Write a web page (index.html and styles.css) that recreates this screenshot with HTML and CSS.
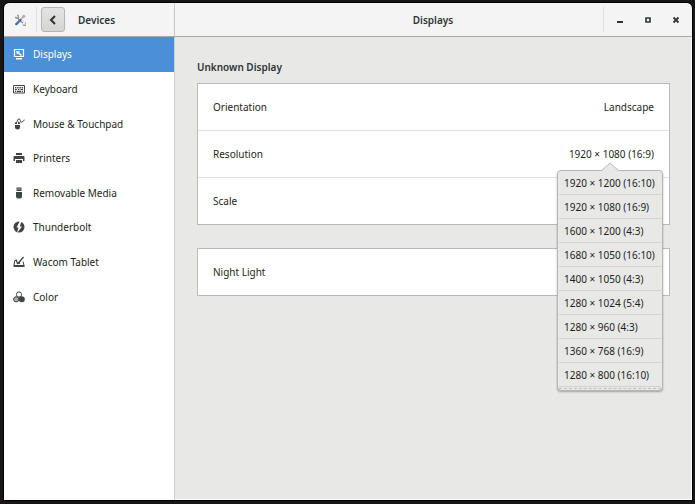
FILE: index.html
```html
<!doctype html>
<html lang="en">
    <head>
        <meta charset="utf-8">
        <title>Displays</title>
        <link rel="stylesheet" href="styles.css">
    </head>
    <body>
        <div class="window">
            <header class="titlebar">
                <div class="titlebar_side">
                    <svg class="app_icon" viewBox="0 0 16 16">
                        <path d="M4 5l8 7" stroke="#8a8e8c" stroke-width="2"/>
                        <path d="M2 3.500a2 2 0 1 0 2-2M15 11.500a2 2 0 1 1-2.500 2.500" fill="none" stroke="#9a9d9a" stroke-width="2"/>
                        <path d="M13 3L7.500 9" stroke="#aaa" stroke-width="2"/>
                        <circle cx="13" cy="3" r="2" fill="#aeb0ac"/>
                        <path d="M8.500 8L3 13.500" stroke="#3767a5" stroke-width="3" stroke-linecap="round"/>
                        <path d="M7 8.500L3 12.500" stroke="#82a8d6" stroke-width="1"/>
                    </svg>
                    <button class="back_button" type="button" aria-label="Back">
                        <svg viewBox="0 0 16 16"><path d="M10 4L6 8l4 4" fill="none" stroke="#2e3436" stroke-width="2"/></svg>
                    </button>
                    <span class="title">Devices</span>
                </div>
                <h1 class="title titlebar_main">Displays</h1>
                <div class="window_controls">
                    <button type="button" aria-label="Minimize"><svg viewBox="0 0 16 16"><path d="M5 10h6" stroke="#2e3436" stroke-width="2"/></svg></button>
                    <button type="button" aria-label="Maximize"><svg viewBox="0 0 16 16"><path d="M6 6h4v4H6z" fill="none" stroke="#2e3436" stroke-width="1.600"/></svg></button>
                    <button type="button" aria-label="Close"><svg viewBox="0 0 16 16"><path d="M5.500 5.500l5 5M10.500 5.500l-5 5" stroke="#2e3436" stroke-width="1.800"/></svg></button>
                </div>
            </header>
            <div class="content">
                <nav class="sidebar">
                    <a class="selected" href="#displays">
                        <svg viewBox="0 0 12 12"><path d="M1.500 1.500h9v7h-9z" fill="none" stroke="currentColor" stroke-width="1.200"/><path d="M3 3l4 .5-1 1 3 2.500-1 1-3-2.500-1 1zM3 10h6v1.500H3z"/></svg>
                        Displays
                    </a>
                    <a href="#keyboard">
                        <svg viewBox="0 0 12 12"><path d="M.5 2.500h11v7.500H.5z" fill="none" stroke="currentColor"/><path d="M2 4h1.400v1.400H2zM4.200 4h1.400v1.400H4.200zM6.400 4h1.400v1.400H6.400zM8.600 4H10v1.400H8.600zM2 6h2v1H2zM5 6h1.400v1H5zM7.400 6H10v1H7.400zM2 7.800h1.300V9H2zM4 7.800h4V9H4zM8.700 7.800H10V9H8.700z"/></svg>
                        Keyboard
                    </a>
                    <a href="#mouse">
                        <svg viewBox="0 0 12 12"><path d="M2 7h5v2a2.500 2.500 0 0 1-5 0zM2 6V5a2 2 0 0 1 2-1.500V6zM5 3.500A2 2 0 0 1 7 5v1H5z"/><path d="M4.500 3.500C4 1 6 .5 7 1.500S6.500 5 9 4s1-2 2.500-2" fill="none" stroke="currentColor"/></svg>
                        Mouse &amp; Touchpad
                    </a>
                    <a href="#printers">
                        <svg viewBox="0 0 12 12"><path d="M3 1h6v2H3zM1.500 4h9a1 1 0 0 1 1 1v4H10V7H2v2H.5V5a1 1 0 0 1 1-1zM3 8h6v3H3z"/></svg>
                        Printers
                    </a>
                    <a href="#media">
                        <svg viewBox="0 0 12 12"><path d="M3.500.5h5V4h-5zM3 5h6v4.500A2 2 0 0 1 7 11.500H5a2 2 0 0 1-2-2z"/><path d="M4.500 1.500h1v1h-1zM6.500 1.500h1v1h-1z" fill="#fff"/></svg>
                        Removable Media
                    </a>
                    <a href="#thunderbolt">
                        <svg viewBox="0 0 12 12"><circle cx="6" cy="6" r="5.500"/><path d="M7 0L3.500 6.500h2L4 12l5-6.500H6.800L8.500 0z" fill="#fff"/></svg>
                        Thunderbolt
                    </a>
                    <a href="#wacom">
                        <svg viewBox="0 0 12 12"><path d="M3 4.500H1.800L.8 10.500h10.500L10 5.500" fill="none" stroke="currentColor"/><path d="M1 9h10v2H1z"/><path d="M10.500 1L5 7.500M3 3.500l1.500 4L7 7" fill="none" stroke="currentColor" stroke-width="1.300"/></svg>
                        Wacom Tablet
                    </a>
                    <a href="#color">
                        <svg viewBox="0 0 12 12"><circle cx="6" cy="3.500" r="2.600" fill="#fff" stroke="currentColor"/><circle cx="3.200" cy="8.300" r="2.600" fill="#aaa" stroke="currentColor"/><circle cx="8.800" cy="8.300" r="3"/></svg>
                        Color
                    </a>
                </nav>
                <main class="panel">
                    <h2>Unknown Display</h2>
                    <ul class="group">
                        <li><button class="row" type="button"><span>Orientation</span><span>Landscape</span></button></li>
                        <li>
                            <button class="row" type="button" aria-expanded="true"><span>Resolution</span><span>1920 × 1080 (16:9)</span></button>
                            <div class="popover">
                                <svg class="arrow" viewBox="0 0 18 9"><path d="M0 9l9-8 9 8" fill="#e8e8e7" stroke="#b5b7b4"/></svg>
                                <button type="button">1920 × 1200 (16:10)</button>
                                <button type="button">1920 × 1080 (16:9)</button>
                                <button type="button">1600 × 1200 (4:3)</button>
                                <button type="button">1680 × 1050 (16:10)</button>
                                <button type="button">1400 × 1050 (4:3)</button>
                                <button type="button">1280 × 1024 (5:4)</button>
                                <button type="button">1280 × 960 (4:3)</button>
                                <button type="button">1360 × 768 (16:9)</button>
                                <button type="button">1280 × 800 (16:10)</button>
                                <div class="more"></div>
                            </div>
                        </li>
                        <li><button class="row" type="button"><span>Scale</span></button></li>
                    </ul>
                    <ul class="group">
                        <li><button class="row" type="button"><span>Night Light</span></button></li>
                    </ul>
                </main>
            </div>
        </div>
    </body>
</html>
```
FILE: styles.css
```css
* {
    box-sizing:border-box;
}

body {
    margin:0;
    height:100vh;
    padding:3px 3px 4px 4px;
    background-color:#181516;
    color:#1c1f20;
    font-family:"Noto Sans", sans-serif;
    font-size:10px;
    line-height:16px;
    overflow:hidden;
}

button {
    font:inherit;
    color:inherit;
    margin:0;
    padding:0;
    border:none;
    background:none;
}

h1, h2, ul {
    margin:0;
    padding:0;
    font-size:10px;
    list-style:none;
}

.window {
    height:100%;
    display:flex;
    flex-direction:column;
    border-radius:5px 5px 0 0;
    outline:1px solid #000000;
    background-color:#e8e8e7;
    overflow:hidden;
}

.titlebar {
    display:flex;
    height:34px;
    flex:none;
    background-color:#f4f4f4;
    border-bottom:1px solid #a8aaa6;
}

.titlebar_side {
    display:flex;
    align-items:center;
    width:171px;
    border-right:1px solid #c8c9c7;
}

.app_icon {
    width:12px;
    height:12px;
    margin:0 10px;
}

.back_button {
    position:relative;
    width:24px;
    height:25px;
    margin:0 13px 0 5px;
    border:1px solid #b4b6b3;
    border-radius:3px;
    background:linear-gradient(#e3e3e1, #d5d6d3);
}

.back_button::before {
    content:"";
    position:absolute;
    left:-6px;
    top:-1px;
    height:25px;
    border-left:1px solid #dddddd;
}

.back_button svg {
    display:block;
    width:16px;
    height:16px;
    margin:auto;
}

.title {
    color:#2e3436;
    font-weight:600;
}

.titlebar_main {
    flex:1;
    align-self:center;
    padding-left:88px;
    text-align:center;
}

.window_controls {
    display:flex;
    align-self:center;
    align-items:center;
    gap:12px;
    height:25px;
    padding:0 8px;
    border-left:1px solid #dddddd;
}

.window_controls svg {
    display:block;
    width:16px;
    height:16px;
}

.content {
    display:flex;
    flex:1;
}

.sidebar {
    display:grid;
    grid-auto-rows:1fr;
    width:171px;
    padding-bottom:186px;
    background-color:#ffffff;
    border-right:1px solid #d0d1cf;
}

.sidebar a {
    display:flex;
    align-items:center;
    gap:8px;
    padding-left:9px;
    color:inherit;
    text-decoration:none;
}

.sidebar svg {
    width:12px;
    height:12px;
    color:#3f4446;
    fill:currentColor;
}

.sidebar .selected, .sidebar .selected svg {
    color:#ffffff;
}

.sidebar .selected {
    background-color:#4a90d9;
}

.panel {
    flex:1;
    padding:22px 21px 22px 22px;
    border-right:1px solid #ffffff;
    border-bottom:1px solid #ffffff;
}

.panel h2 {
    margin-bottom:8px;
    color:#2e3436;
    font-weight:600;
}

.group {
    margin-bottom:23px;
    border:1px solid #b8bab7;
    background-color:#ffffff;
}

.group li {
    position:relative;
}

.group li + li {
    border-top:1px solid #e2e2e1;
}

.row {
    display:flex;
    justify-content:space-between;
    align-items:center;
    width:100%;
    height:46px;
    padding:0 15px;
}

.popover {
    position:absolute;
    z-index:1;
    top:39px;
    right:6px;
    width:106px;
    padding:0 1px 1px;
    border:1px solid #b5b7b4;
    border-radius:4px;
    background-color:#e8e8e7;
    box-shadow:0 1px 2px rgba(0, 0, 0, 0.3);
}

.popover button {
    display:block;
    width:100%;
    height:24px;
    padding-left:5px;
    border-bottom:1px solid #d2d3d1;
    text-align:left;
    white-space:nowrap;
}

.arrow {
    position:absolute;
    top:-9px;
    left:43px;
    width:18px;
    height:9px;
}

.more {
    border-bottom:1px dashed #c2c3c1;
    height:2px;
}
```
